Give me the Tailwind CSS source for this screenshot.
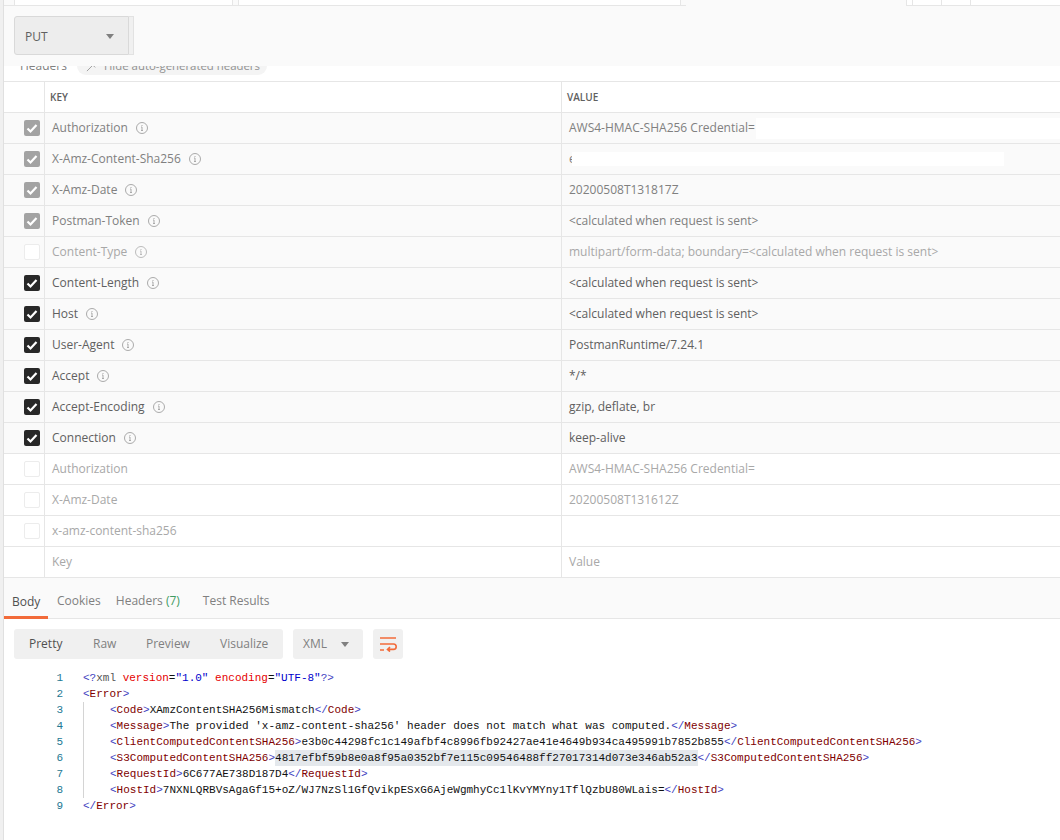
<!DOCTYPE html>
<html lang="en">
<head>
  <meta charset="UTF-8" />
  <title>Postman request</title>
  <script src="https://cdn.jsdelivr.net/npm/@tailwindcss/browser@4"></script>
</head>
<body class="bg-white font-['Open_Sans',sans-serif] text-[12px] text-[#707070] w-[1060px] h-[840px] overflow-hidden">
  <div class="flex h-[840px]">
    <!-- left edge of the sidebar -->
    <div class="w-[4px] shrink-0 bg-[#f0f0f0] border-r border-[#e0e0e0]"></div>

    <main class="flex-1 min-w-0 flex flex-col">
      <!-- clipped tab strip -->
      <div class="h-[6px] shrink-0 flex border-b border-[#e6e6e6] bg-[#fafafa]">
        <div class="w-[10px]"></div>
        <div class="w-[219px] bg-white border-x border-[#e6e6e6]"></div>
        <div class="w-[5px]"></div>
        <div class="w-[443px] bg-white border-x border-[#e6e6e6]"></div>
        <div class="w-[5px]"></div>
        <div class="w-[220px] border-b border-[#fafafa] -mb-px"></div>
        <div class="w-[7px] bg-white border-x border-[#e6e6e6]"></div>
        <div class="w-[29px] bg-white border-r border-[#e6e6e6]"></div>
        <div class="w-[29px] bg-white border-r border-[#e6e6e6]"></div>
        <div class="flex-1 bg-white"></div>
      </div>

      <!-- method bar -->
      <div class="h-[60px] shrink-0 bg-[#fafafa] pl-[10px] pt-[10px]">
        <div class="flex h-[39px] w-[120px]">
          <div class="w-[115px] bg-[#ededed] border border-[#d9d9d9] rounded-l-[3px] flex items-center justify-between pl-[10px] pr-[14px] pt-[2px] text-[#606060]">
            <span>PUT</span>
            <span class="w-0 h-0 border-x-[4px] border-x-transparent border-t-[5px] border-t-[#808080]"></span>
          </div>
          <div class="w-[5px] bg-[#f0f0f0] border-y border-r border-[#e2e2e2]"></div>
        </div>
      </div>

      <!-- headers sub-title, cut by the bar above -->
      <div class="h-[15px] shrink-0 overflow-hidden flex pl-[16px]">
        <span class="-mt-[9px] leading-[18px] text-[#808080]">Headers</span>
        <div class="-mt-[9px] ml-[10px] h-[18px] w-[190px] bg-[#f4f4f4] rounded-[9px] flex items-center pl-[9px] gap-[7px] text-[#909090] text-[11.4px]">
          <svg class="w-[11px] h-[11px]" viewBox="0 0 12 12" fill="none" stroke="#999" stroke-width="1"><path d="M1 11 7 5M5 2l5 5M7 1l4 4"/></svg>
          <span>Hide auto-generated headers</span>
        </div>
      </div>

      <!-- header table -->
      <div class="shrink-0 border-t border-[#e6e6e6]">
        <div class="flex h-[31px] border-b border-[#e6e6e6] text-[10px] font-semibold text-[#606060]">
          <div class="w-[41px] border-r border-[#e6e6e6]"></div>
          <div class="w-[517px] border-r border-[#e6e6e6] pl-[5px] flex items-center">KEY</div>
          <div class="flex-1 pl-[5px] flex items-center">VALUE</div>
        </div>

        <div class="flex h-[31px] border-b border-[#e6e6e6] bg-[#fafafa] text-[#808080]">
          <div class="w-[41px] border-r border-[#e6e6e6] flex items-center pl-[20px]"><span class="w-[16px] h-[16px] rounded-[2px] bg-[#a3a3a3] flex items-center justify-center"><svg class="w-[12px] h-[12px]" viewBox="0 0 12 12" fill="none" stroke="#fff" stroke-width="2.2"><path d="M1.5 6.5 4.5 9.5 10.5 3"/></svg></span></div>
          <div class="w-[517px] border-r border-[#e6e6e6] pl-[7px] flex items-center gap-[8px]">Authorization <svg class="w-[12px] h-[12px]" viewBox="0 0 12 12" fill="none" stroke="#aaa"><circle cx="6" cy="6" r="5.5"/><path d="M6 5v3.5M5 8.5h2M5 5h1M6 3v1"/></svg></div>
          <div class="flex-1 pl-[7px] flex items-center">AWS4-HMAC-SHA256 Credential=<span class="ml-[1px] flex-1 h-[21px] bg-white"></span></div>
        </div>
        <div class="flex h-[31px] border-b border-[#e6e6e6] bg-[#fafafa] text-[#808080]">
          <div class="w-[41px] border-r border-[#e6e6e6] flex items-center pl-[20px]"><span class="w-[16px] h-[16px] rounded-[2px] bg-[#a3a3a3] flex items-center justify-center"><svg class="w-[12px] h-[12px]" viewBox="0 0 12 12" fill="none" stroke="#fff" stroke-width="2.2"><path d="M1.5 6.5 4.5 9.5 10.5 3"/></svg></span></div>
          <div class="w-[517px] border-r border-[#e6e6e6] pl-[7px] flex items-center gap-[8px]">X-Amz-Content-Sha256 <svg class="w-[12px] h-[12px]" viewBox="0 0 12 12" fill="none" stroke="#aaa"><circle cx="6" cy="6" r="5.5"/><path d="M6 5v3.5M5 8.5h2M5 5h1M6 3v1"/></svg></div>
          <div class="flex-1 pl-[7px] flex items-center"><span class="w-[3px] h-[16px] leading-[16px] overflow-hidden">e</span><span class="w-[432px] h-[14px] bg-white"></span></div>
        </div>
        <div class="flex h-[31px] border-b border-[#e6e6e6] bg-[#fafafa] text-[#808080]">
          <div class="w-[41px] border-r border-[#e6e6e6] flex items-center pl-[20px]"><span class="w-[16px] h-[16px] rounded-[2px] bg-[#a3a3a3] flex items-center justify-center"><svg class="w-[12px] h-[12px]" viewBox="0 0 12 12" fill="none" stroke="#fff" stroke-width="2.2"><path d="M1.5 6.5 4.5 9.5 10.5 3"/></svg></span></div>
          <div class="w-[517px] border-r border-[#e6e6e6] pl-[7px] flex items-center gap-[8px]">X-Amz-Date <svg class="w-[12px] h-[12px]" viewBox="0 0 12 12" fill="none" stroke="#aaa"><circle cx="6" cy="6" r="5.5"/><path d="M6 5v3.5M5 8.5h2M5 5h1M6 3v1"/></svg></div>
          <div class="flex-1 pl-[7px] flex items-center">20200508T131817Z</div>
        </div>
        <div class="flex h-[31px] border-b border-[#e6e6e6] bg-[#fafafa] text-[#808080]">
          <div class="w-[41px] border-r border-[#e6e6e6] flex items-center pl-[20px]"><span class="w-[16px] h-[16px] rounded-[2px] bg-[#a3a3a3] flex items-center justify-center"><svg class="w-[12px] h-[12px]" viewBox="0 0 12 12" fill="none" stroke="#fff" stroke-width="2.2"><path d="M1.5 6.5 4.5 9.5 10.5 3"/></svg></span></div>
          <div class="w-[517px] border-r border-[#e6e6e6] pl-[7px] flex items-center gap-[8px]">Postman-Token <svg class="w-[12px] h-[12px]" viewBox="0 0 12 12" fill="none" stroke="#aaa"><circle cx="6" cy="6" r="5.5"/><path d="M6 5v3.5M5 8.5h2M5 5h1M6 3v1"/></svg></div>
          <div class="flex-1 pl-[7px] flex items-center">&lt;calculated when request is sent&gt;</div>
        </div>
        <div class="flex h-[31px] border-b border-[#e6e6e6] bg-[#fafafa] text-[#a8a8a8]">
          <div class="w-[41px] border-r border-[#e6e6e6] flex items-center pl-[20px]"><span class="w-[16px] h-[16px] rounded-[2px] bg-white border border-[#ececec]"></span></div>
          <div class="w-[517px] border-r border-[#e6e6e6] pl-[7px] flex items-center gap-[8px]">Content-Type <svg class="w-[12px] h-[12px]" viewBox="0 0 12 12" fill="none" stroke="#bbb"><circle cx="6" cy="6" r="5.5"/><path d="M6 5v3.5M5 8.5h2M5 5h1M6 3v1"/></svg></div>
          <div class="flex-1 pl-[7px] flex items-center">multipart/form-data; boundary=&lt;calculated when request is sent&gt;</div>
        </div>
        <div class="flex h-[31px] border-b border-[#e6e6e6] bg-[#fafafa] text-[#606060]">
          <div class="w-[41px] border-r border-[#e6e6e6] flex items-center pl-[20px]"><span class="w-[16px] h-[16px] rounded-[2px] bg-[#282828] flex items-center justify-center"><svg class="w-[12px] h-[12px]" viewBox="0 0 12 12" fill="none" stroke="#fff" stroke-width="2.2"><path d="M1.5 6.5 4.5 9.5 10.5 3"/></svg></span></div>
          <div class="w-[517px] border-r border-[#e6e6e6] pl-[7px] flex items-center gap-[8px]">Content-Length <svg class="w-[12px] h-[12px]" viewBox="0 0 12 12" fill="none" stroke="#aaa"><circle cx="6" cy="6" r="5.5"/><path d="M6 5v3.5M5 8.5h2M5 5h1M6 3v1"/></svg></div>
          <div class="flex-1 pl-[7px] flex items-center">&lt;calculated when request is sent&gt;</div>
        </div>
        <div class="flex h-[31px] border-b border-[#e6e6e6] bg-[#fafafa] text-[#606060]">
          <div class="w-[41px] border-r border-[#e6e6e6] flex items-center pl-[20px]"><span class="w-[16px] h-[16px] rounded-[2px] bg-[#282828] flex items-center justify-center"><svg class="w-[12px] h-[12px]" viewBox="0 0 12 12" fill="none" stroke="#fff" stroke-width="2.2"><path d="M1.5 6.5 4.5 9.5 10.5 3"/></svg></span></div>
          <div class="w-[517px] border-r border-[#e6e6e6] pl-[7px] flex items-center gap-[8px]">Host <svg class="w-[12px] h-[12px]" viewBox="0 0 12 12" fill="none" stroke="#aaa"><circle cx="6" cy="6" r="5.5"/><path d="M6 5v3.5M5 8.5h2M5 5h1M6 3v1"/></svg></div>
          <div class="flex-1 pl-[7px] flex items-center">&lt;calculated when request is sent&gt;</div>
        </div>
        <div class="flex h-[31px] border-b border-[#e6e6e6] bg-[#fafafa] text-[#606060]">
          <div class="w-[41px] border-r border-[#e6e6e6] flex items-center pl-[20px]"><span class="w-[16px] h-[16px] rounded-[2px] bg-[#282828] flex items-center justify-center"><svg class="w-[12px] h-[12px]" viewBox="0 0 12 12" fill="none" stroke="#fff" stroke-width="2.2"><path d="M1.5 6.5 4.5 9.5 10.5 3"/></svg></span></div>
          <div class="w-[517px] border-r border-[#e6e6e6] pl-[7px] flex items-center gap-[8px]">User-Agent <svg class="w-[12px] h-[12px]" viewBox="0 0 12 12" fill="none" stroke="#aaa"><circle cx="6" cy="6" r="5.5"/><path d="M6 5v3.5M5 8.5h2M5 5h1M6 3v1"/></svg></div>
          <div class="flex-1 pl-[7px] flex items-center">PostmanRuntime/7.24.1</div>
        </div>
        <div class="flex h-[31px] border-b border-[#e6e6e6] bg-[#fafafa] text-[#606060]">
          <div class="w-[41px] border-r border-[#e6e6e6] flex items-center pl-[20px]"><span class="w-[16px] h-[16px] rounded-[2px] bg-[#282828] flex items-center justify-center"><svg class="w-[12px] h-[12px]" viewBox="0 0 12 12" fill="none" stroke="#fff" stroke-width="2.2"><path d="M1.5 6.5 4.5 9.5 10.5 3"/></svg></span></div>
          <div class="w-[517px] border-r border-[#e6e6e6] pl-[7px] flex items-center gap-[8px]">Accept <svg class="w-[12px] h-[12px]" viewBox="0 0 12 12" fill="none" stroke="#aaa"><circle cx="6" cy="6" r="5.5"/><path d="M6 5v3.5M5 8.5h2M5 5h1M6 3v1"/></svg></div>
          <div class="flex-1 pl-[7px] flex items-center">*/*</div>
        </div>
        <div class="flex h-[31px] border-b border-[#e6e6e6] bg-[#fafafa] text-[#606060]">
          <div class="w-[41px] border-r border-[#e6e6e6] flex items-center pl-[20px]"><span class="w-[16px] h-[16px] rounded-[2px] bg-[#282828] flex items-center justify-center"><svg class="w-[12px] h-[12px]" viewBox="0 0 12 12" fill="none" stroke="#fff" stroke-width="2.2"><path d="M1.5 6.5 4.5 9.5 10.5 3"/></svg></span></div>
          <div class="w-[517px] border-r border-[#e6e6e6] pl-[7px] flex items-center gap-[8px]">Accept-Encoding <svg class="w-[12px] h-[12px]" viewBox="0 0 12 12" fill="none" stroke="#aaa"><circle cx="6" cy="6" r="5.5"/><path d="M6 5v3.5M5 8.5h2M5 5h1M6 3v1"/></svg></div>
          <div class="flex-1 pl-[7px] flex items-center">gzip, deflate, br</div>
        </div>
        <div class="flex h-[31px] border-b border-[#e6e6e6] bg-[#fafafa] text-[#606060]">
          <div class="w-[41px] border-r border-[#e6e6e6] flex items-center pl-[20px]"><span class="w-[16px] h-[16px] rounded-[2px] bg-[#282828] flex items-center justify-center"><svg class="w-[12px] h-[12px]" viewBox="0 0 12 12" fill="none" stroke="#fff" stroke-width="2.2"><path d="M1.5 6.5 4.5 9.5 10.5 3"/></svg></span></div>
          <div class="w-[517px] border-r border-[#e6e6e6] pl-[7px] flex items-center gap-[8px]">Connection <svg class="w-[12px] h-[12px]" viewBox="0 0 12 12" fill="none" stroke="#aaa"><circle cx="6" cy="6" r="5.5"/><path d="M6 5v3.5M5 8.5h2M5 5h1M6 3v1"/></svg></div>
          <div class="flex-1 pl-[7px] flex items-center">keep-alive</div>
        </div>
        <div class="flex h-[31px] border-b border-[#e6e6e6] text-[#a8a8a8]">
          <div class="w-[41px] border-r border-[#e6e6e6] flex items-center pl-[20px]"><span class="w-[16px] h-[16px] rounded-[2px] bg-white border border-[#ececec]"></span></div>
          <div class="w-[517px] border-r border-[#e6e6e6] pl-[7px] flex items-center">Authorization</div>
          <div class="flex-1 pl-[7px] flex items-center">AWS4-HMAC-SHA256 Credential=</div>
        </div>
        <div class="flex h-[31px] border-b border-[#e6e6e6] text-[#a8a8a8]">
          <div class="w-[41px] border-r border-[#e6e6e6] flex items-center pl-[20px]"><span class="w-[16px] h-[16px] rounded-[2px] bg-white border border-[#ececec]"></span></div>
          <div class="w-[517px] border-r border-[#e6e6e6] pl-[7px] flex items-center">X-Amz-Date</div>
          <div class="flex-1 pl-[7px] flex items-center">20200508T131612Z</div>
        </div>
        <div class="flex h-[31px] border-b border-[#e6e6e6] text-[#a8a8a8]">
          <div class="w-[41px] border-r border-[#e6e6e6] flex items-center pl-[20px]"><span class="w-[16px] h-[16px] rounded-[2px] bg-white border border-[#ececec]"></span></div>
          <div class="w-[517px] border-r border-[#e6e6e6] pl-[7px] flex items-center">x-amz-content-sha256</div>
          <div class="flex-1 pl-[7px] flex items-center"></div>
        </div>
        <div class="flex h-[31px] border-b border-[#e6e6e6] text-[#a8a8a8]">
          <div class="w-[41px] border-r border-[#e6e6e6]"></div>
          <div class="w-[517px] border-r border-[#e6e6e6] pl-[7px] flex items-center">Key</div>
          <div class="flex-1 pl-[7px] flex items-center">Value</div>
        </div>
      </div>

      <!-- response tabs -->
      <div class="h-[41px] shrink-0 bg-[#fafafa] border-b border-[#e6e6e6] flex items-end text-[#808080]">
        <div class="w-[44px] h-[41px] -mb-px border-b-[3px] border-[#f26b3a] pl-[8px] pt-[15px] leading-[17px] text-[#505050]">Body</div>
        <div class="h-[41px] pl-[9px] pt-[15px] leading-[17px]">Cookies</div>
        <div class="h-[41px] pl-[15px] pt-[15px] leading-[17px]">Headers <span class="text-[#3f9c62]">(7)</span></div>
        <div class="h-[41px] pl-[23px] pt-[15px] leading-[17px]">Test Results</div>
      </div>

      <!-- body toolbar -->
      <div class="h-[41px] shrink-0 pl-[10px] pt-[10px] flex gap-[10px]">
        <div class="w-[269px] h-[30px] bg-[#f0f0f0] rounded-[3px] flex items-center pl-[15px] text-[#808080]">
          <span class="text-[#505050] w-[64px]">Pretty</span>
          <span class="w-[53px]">Raw</span>
          <span class="w-[74px]">Preview</span>
          <span>Visualize</span>
        </div>
        <div class="w-[70px] h-[30px] bg-[#f0f0f0] rounded-[3px] flex items-center justify-between pl-[10px] pr-[14px] text-[#808080]">
          <span>XML</span>
          <span class="w-0 h-0 border-x-[4px] border-x-transparent border-t-[5px] border-t-[#808080]"></span>
        </div>
        <div class="w-[30px] h-[30px] bg-[#f0f0f0] rounded-[3px] flex items-center justify-center">
          <svg class="w-[18px] h-[16px]" viewBox="0 0 18 16" fill="none" stroke="#f26b3a" stroke-width="1.6"><path d="M1 2h16M1 8h13.5a2.7 2.7 0 0 1 0 5.4H8.5M11 11 8.5 13.4 11 15.6M1 14h4"/></svg>
        </div>
      </div>

      <!-- xml body -->
      <div class="flex pt-[10px] font-['Liberation_Mono',monospace] text-[11px] leading-[16px] whitespace-nowrap">
        <div class="w-[59px] shrink-0 text-right text-[#237893]">
          <div>1</div><div>2</div><div>3</div><div>4</div><div>5</div><div>6</div><div>7</div><div>8</div><div>9</div>
        </div>
        <div class="ml-[20px] text-[#111]">
          <div><span class="text-[#3f3fbf]">&lt;?</span><span class="text-[#555]">xml</span> <span class="text-[#e50000]">version</span>=<span class="text-[#0000cc]">"1.0"</span> <span class="text-[#e50000]">encoding</span>=<span class="text-[#0000cc]">"UTF-8"</span><span class="text-[#3f3fbf]">?&gt;</span></div>
          <div><span class="text-[#3f3fbf]">&lt;</span><span class="text-[#800000]">Error</span><span class="text-[#3f3fbf]">&gt;</span></div>
          <div class="border-l border-[#d4d4d4] pl-[26px]">
            <div><span class="text-[#3f3fbf]">&lt;</span><span class="text-[#800000]">Code</span><span class="text-[#3f3fbf]">&gt;</span>XAmzContentSHA256Mismatch<span class="text-[#3f3fbf]">&lt;/</span><span class="text-[#800000]">Code</span><span class="text-[#3f3fbf]">&gt;</span></div>
            <div><span class="text-[#3f3fbf]">&lt;</span><span class="text-[#800000]">Message</span><span class="text-[#3f3fbf]">&gt;</span>The provided 'x-amz-content-sha256' header does not match what was computed.<span class="text-[#3f3fbf]">&lt;/</span><span class="text-[#800000]">Message</span><span class="text-[#3f3fbf]">&gt;</span></div>
            <div><span class="text-[#3f3fbf]">&lt;</span><span class="text-[#800000]">ClientComputedContentSHA256</span><span class="text-[#3f3fbf]">&gt;</span>e3b0c44298fc1c149afbf4c8996fb92427ae41e4649b934ca495991b7852b855<span class="text-[#3f3fbf]">&lt;/</span><span class="text-[#800000]">ClientComputedContentSHA256</span><span class="text-[#3f3fbf]">&gt;</span></div>
            <div><span class="text-[#3f3fbf]">&lt;</span><span class="text-[#800000]">S3ComputedContentSHA256</span><span class="text-[#3f3fbf]">&gt;</span><span class="bg-[#e4e8ec] inline-block">4817efbf59b8e0a8f95a0352bf7e115c09546488ff27017314d073e346ab52a3</span><span class="text-[#3f3fbf]">&lt;/</span><span class="text-[#800000]">S3ComputedContentSHA256</span><span class="text-[#3f3fbf]">&gt;</span></div>
            <div><span class="text-[#3f3fbf]">&lt;</span><span class="text-[#800000]">RequestId</span><span class="text-[#3f3fbf]">&gt;</span>6C677AE738D187D4<span class="text-[#3f3fbf]">&lt;/</span><span class="text-[#800000]">RequestId</span><span class="text-[#3f3fbf]">&gt;</span></div>
            <div><span class="text-[#3f3fbf]">&lt;</span><span class="text-[#800000]">HostId</span><span class="text-[#3f3fbf]">&gt;</span>7NXNLQRBVsAgaGf15+oZ/WJ7NzSl1GfQvikpESxG6AjeWgmhyCc1lKvYMYny1TflQzbU80WLais=<span class="text-[#3f3fbf]">&lt;/</span><span class="text-[#800000]">HostId</span><span class="text-[#3f3fbf]">&gt;</span></div>
          </div>
          <div><span class="text-[#3f3fbf]">&lt;/</span><span class="text-[#800000]">Error</span><span class="text-[#3f3fbf]">&gt;</span></div>
        </div>
      </div>
    </main>
  </div>
</body>
</html>
